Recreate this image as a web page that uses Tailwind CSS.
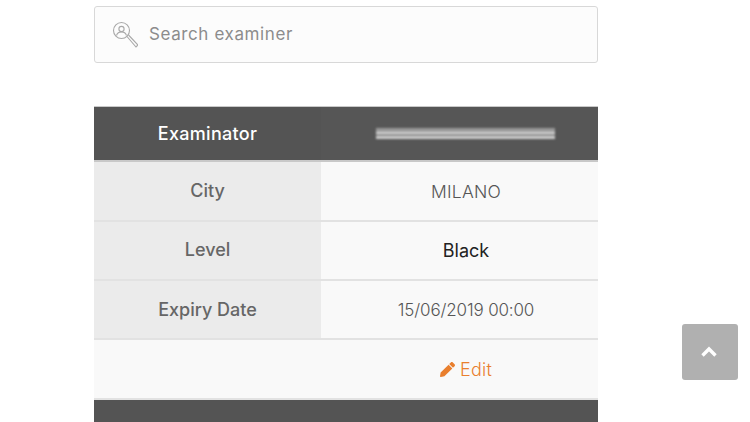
<!DOCTYPE html>
<html lang="en">
<head>
  <meta charset="UTF-8">
  <meta name="viewport" content="width=device-width, initial-scale=1.0">
  <title>Examiners</title>
  <script src="https://cdn.jsdelivr.net/npm/@tailwindcss/browser@4"></script>
</head>
<body class="bg-white font-['Inter',sans-serif] h-[422px] overflow-hidden">
  <main class="w-[504px] ml-[94px] pt-[6px]">
    <!-- Search -->
    <div class="h-[57px] flex items-center bg-[#fcfcfc] border border-[#d8d8d8] rounded-[3px] pl-[17px]">
      <svg class="w-[26px] h-[28px] text-[#a8a8a8]" viewBox="0 0 26 28" fill="none" stroke="currentColor" stroke-width="1.100">
        <circle cx="9.500" cy="9.500" r="8"/>
        <circle cx="9.500" cy="8" r="2.600"/>
        <path d="M4.500 14.500c.8-2.400 2.600-3.600 5-3.600s4.200 1.200 5 3.600"/>
        <path d="M15 15.500l9 10.500 2-2-9.500-10"/>
      </svg>
      <span class="ml-[11px] pt-px text-[17px] tracking-[.6px] text-[#8c8c8c]">Search examiner</span>
    </div>

    <!-- Examiner card -->
    <div class="mt-[43px] border-t border-[#c9c9c9]">
      <div class="grid grid-cols-[227px_277px] h-[55px] bg-[#545454] border-b-2 border-[#c8c8c8]">
        <div class="flex items-center justify-center text-[18px] font-medium tracking-[.3px] text-white">Examinator</div>
        <div class="flex items-center justify-center bg-[#565656] pl-[11px]">
          <!-- name is blurred out in the source -->
          <div class="w-[179px] h-[11px] [filter:blur(1.2px)] bg-[linear-gradient(180deg,#9a9a9a_0_4px,#d6d6d6_4px_6px,#8a8a8a_6px_8px,#cccccc_8px_11px)]"></div>
        </div>
      </div>

      <div class="grid grid-cols-[227px_277px] h-[60px] border-b-2 border-[#e2e2e2]">
        <div class="flex items-center justify-center pb-[2px] bg-[#ebebeb] text-[18px] font-medium text-[#666]">City</div>
        <div class="flex items-center justify-center pl-[13px] pt-[2px] bg-[#f9f9f9] text-[17.500px] font-light tracking-[.2px] text-[#555]">MILANO</div>
      </div>
      <div class="grid grid-cols-[227px_277px] h-[59px] border-b-2 border-[#e2e2e2]">
        <div class="flex items-center justify-center pb-[2px] bg-[#ebebeb] text-[18px] font-medium text-[#666]">Level</div>
        <div class="flex items-center justify-center pl-[13px] bg-[#f9f9f9] text-[18px] font-normal text-[#222]">Black</div>
      </div>
      <div class="grid grid-cols-[227px_277px] h-[59px] border-b-2 border-[#e2e2e2]">
        <div class="flex items-center justify-center pb-[1px] bg-[#ebebeb] text-[18px] font-medium text-[#666]">Expiry Date</div>
        <div class="flex items-center justify-center pl-[13px] pt-[2px] bg-[#f9f9f9] text-[17px] font-light tracking-[-.15px] text-[#555]">15/06/2019 00:00</div>
      </div>
      <div class="grid grid-cols-[227px_277px] h-[60px] border-b-2 border-[#e2e2e2] bg-[#f9f9f9]">
        <div></div>
        <div class="flex items-center justify-center gap-[5px] pl-[13px] text-[18px] font-light tracking-[.2px] text-[#e97f2e]">
          <svg class="w-[15px] h-[15px]" viewBox="0 0 512 512" fill="currentColor">
            <path d="M497.900 142.100l-46.100 46.100c-4.700 4.700-12.300 4.700-17 0l-111-111c-4.700-4.700-4.700-12.300 0-17l46.100-46.100c18.700-18.700 49.100-18.700 67.900 0l60.100 60.100c18.800 18.700 18.800 49.100 0 67.900zM284.200 99.800L21.600 362.400.4 483.900c-2.900 16.400 11.400 30.600 27.800 27.800l121.500-21.300 262.600-262.600c4.700-4.700 4.700-12.300 0-17l-111-111c-4.800-4.700-12.400-4.700-17.100 0z"/>
          </svg>
          <span>Edit</span>
        </div>
      </div>
      <div class="h-[30px] bg-[#545454]"></div>
    </div>
  </main>

  <!-- Back to top -->
  <a href="#" class="fixed left-[682px] top-[324px] w-[56px] h-[56px] rounded-[3px] bg-[#b0b0b0] flex items-center justify-center">
    <svg class="w-[16px] h-[11px] mb-[1px] mr-[3px]" viewBox="0 0 16 11" fill="none" stroke="white" stroke-width="3.400"><path d="M1.500 9.500L8 3l6.500 6.500"/></svg>
  </a>
</body>
</html>
